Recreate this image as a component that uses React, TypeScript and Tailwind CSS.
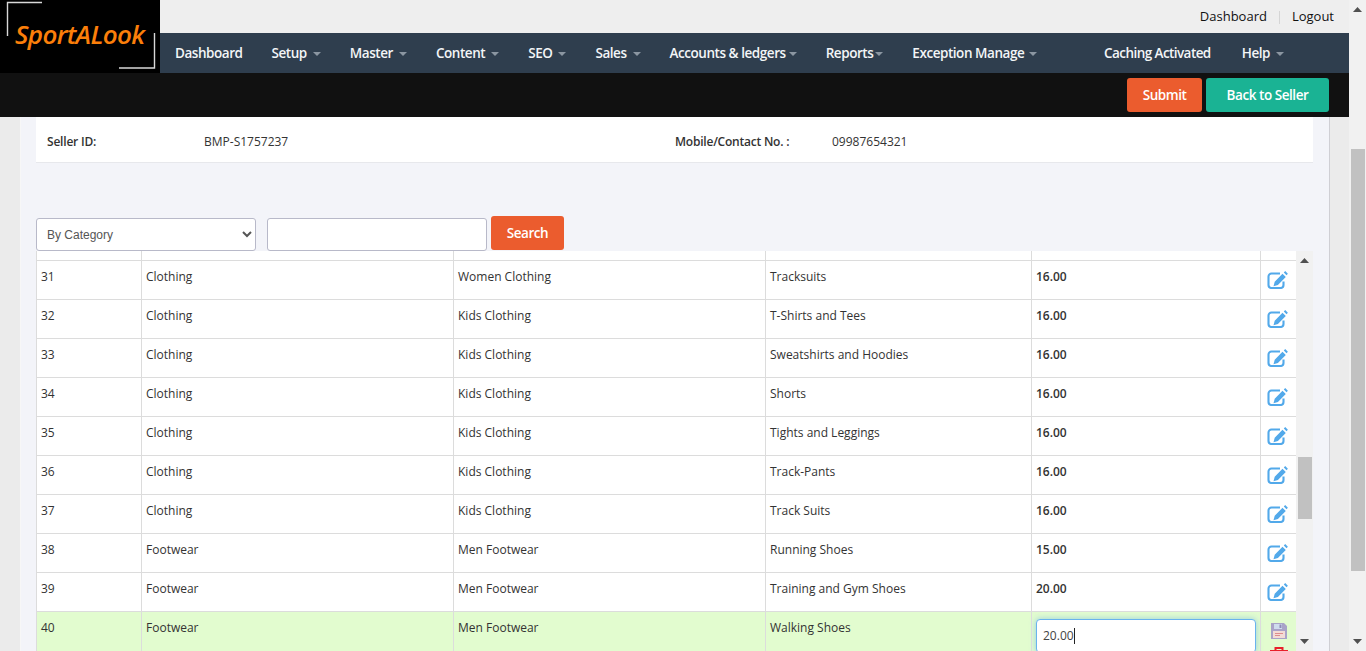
const FONT = "font-['Open_Sans','Noto_Sans',sans-serif]";

const NAV_LEFT = [
  { label: "Dashboard", caret: "" },
  { label: "Setup", caret: "ml-[6px]" },
  { label: "Master", caret: "ml-[6px]" },
  { label: "Content", caret: "ml-[6px]" },
  { label: "SEO", caret: "ml-[6px]" },
  { label: "Sales", caret: "ml-[6px]" },
  { label: "Accounts & ledgers", caret: "ml-[3px]" },
  { label: "Reports", caret: "ml-[2px]" },
  { label: "Exception Manage", caret: "ml-[5px]" },
];

const ROWS = [
  ["31", "Clothing", "Women Clothing", "Tracksuits", "16.00"],
  ["32", "Clothing", "Kids Clothing", "T-Shirts and Tees", "16.00"],
  ["33", "Clothing", "Kids Clothing", "Sweatshirts and Hoodies", "16.00"],
  ["34", "Clothing", "Kids Clothing", "Shorts", "16.00"],
  ["35", "Clothing", "Kids Clothing", "Tights and Leggings", "16.00"],
  ["36", "Clothing", "Kids Clothing", "Track-Pants", "16.00"],
  ["37", "Clothing", "Kids Clothing", "Track Suits", "16.00"],
  ["38", "Footwear", "Men Footwear", "Running Shoes", "15.00"],
  ["39", "Footwear", "Men Footwear", "Training and Gym Shoes", "20.00"],
];

const CELL = "border border-[#dcdcdc] px-[4px] pb-[5px] align-middle text-[12px] text-[#333]";
const LAST_CELL = "border border-[#dcdcdc] px-[4px] pb-[26px] align-middle text-[12px] text-[#333]";

function Caret({ className }: { className: string }) {
  return <span className={`${className} inline-block h-0 w-0 border-x-[4px] border-t-[4px] border-x-transparent border-t-[#8b96a1]`} />;
}

function Arrow({ down }: { down?: boolean }) {
  return (
    <svg width="9" height="5" viewBox="0 0 9 5" className="shrink-0">
      <path d={down ? "M0 0h9L4.500 5z" : "M4.500 0L9 5H0z"} fill="#505050" />
    </svg>
  );
}

function EditIcon() {
  return (
    <svg width="21" height="18" viewBox="0 0 21 18" className="mx-auto block -translate-x-[1px]">
      <path d="M13 2.500H4.500A3 3 0 0 0 1.500 5.500v8.500a3 3 0 0 0 3 3h9a3 3 0 0 0 3-3V10.500" fill="none" stroke="#52a9ea" strokeWidth="2.100" />
      <path d="M15.500 2.800l3.300 3.300-7.900 7.900-4.400 1.200 1.200-4.500zM16.800 1.500l1.400-1.400 2.700 2.700-1.400 1.500z" fill="#52a9ea" />
    </svg>
  );
}

function SaveIcon() {
  return (
    <svg width="16" height="16" viewBox="0 0 16 16" className="mx-auto block">
      <path d="M0 0h13l3 3v13H0z" fill="#a9a3c8" />
      <path d="M3 1h8v5H3z" fill="#cfdcee" />
      <path d="M8.500 1.500h2V5h-2z" fill="#8f8ab8" />
      <path d="M2 8h12v7H2z" fill="#f3dcd6" />
      <path d="M4 10h8v1H4zM4 12h5v1H4z" fill="#dd8c8c" />
    </svg>
  );
}

function DeleteIcon() {
  return (
    <svg width="18" height="16" viewBox="0 0 18 16" className="mx-auto mt-[8px] block">
      <path d="M5.500 3V1h7v2" fill="none" stroke="#e8202a" strokeWidth="2" />
      <path d="M0 3h18v2H0zM3 5h12v11H3z" fill="#e8202a" />
    </svg>
  );
}

function Logo() {
  return (
    <div className="relative flex h-[73px] w-[160px] shrink-0 items-start bg-black pl-[15px] pt-[17px]">
      <svg width="160" height="73" viewBox="0 0 160 73" className="absolute left-0 top-0">
        <path d="M42 2.500H7.500V36M154.500 33V68H119" fill="none" stroke="#d8d8d8" strokeWidth="1.400" />
      </svg>
      <span className="text-[26px] font-semibold italic leading-[34px] tracking-[-0.65px] text-[#fb7f0a]">SportALook</span>
    </div>
  );
}

function Header() {
  return (
    <div className="flex shrink-0">
      <Logo />
      <div className="min-w-0 flex-1">
        <div className="flex h-[33px] items-center justify-end bg-[#eeeeee] pt-[1px] pr-[15px] text-[13px] text-[#111]">
          <span>Dashboard</span>
          <span className="mx-[12px] h-[13px] w-px bg-[#d5d5d5]" />
          <span>Logout</span>
        </div>
        <div className="flex h-[40px] items-center justify-between bg-[#2f3e4e] pl-[15px] pr-[65px] pt-[1px] text-[13.5px] font-semibold tracking-[-0.45px] text-[#f3f5f7]">
          <div className="flex gap-[29px]">
            {NAV_LEFT.map((item) => (
              <span key={item.label} className="flex items-center">
                {item.label}
                {item.caret && <Caret className={item.caret} />}
              </span>
            ))}
          </div>
          <div className="flex gap-[31px]">
            <span className="tracking-[-0.57px]">Caching Activated</span>
            <span className="flex items-center">
              Help
              <Caret className="ml-[6px]" />
            </span>
          </div>
        </div>
      </div>
    </div>
  );
}

function ActionBar() {
  return (
    <div className="flex h-[44px] shrink-0 justify-end gap-[4px] bg-[#111111] pr-[20px] pt-[5px] text-[13.5px] font-semibold tracking-[-0.45px] text-white">
      <button type="button" className="h-[34px] w-[75px] rounded-[3px] bg-[#eb5c2e]">Submit</button>
      <button type="button" className="h-[34px] w-[123px] rounded-[3px] bg-[#1ab394]">Back to Seller</button>
    </div>
  );
}

function SellerInfo() {
  return (
    <div className="mr-[16px] flex h-[46px] items-center border-b border-[#e7e8ec] bg-white pl-[11px] pt-[5px] text-[12px] text-[#333]">
      <span className="w-[157px] font-semibold tracking-[-0.2px]">Seller ID:</span>
      <span className="w-[471px]">BMP-S1757237</span>
      <span className="w-[157px] font-semibold tracking-[-0.22px]">Mobile/Contact No. :</span>
      <span>09987654321</span>
    </div>
  );
}

function SearchBar() {
  return (
    <div className="mt-[53px] flex h-[35px] items-start">
      <select className="mt-[2px] h-[33px] w-[220px] rounded-[3px] border border-[#b8b9c9] bg-white pl-[6px] font-['Liberation_Sans',sans-serif] text-[12px] text-[#555]" defaultValue="category">
        <option value="category">By Category</option>
      </select>
      <input type="text" className="ml-[11px] mt-[2px] h-[33px] w-[220px] rounded-[3px] border border-[#b8b9c9] bg-white" />
      <button type="button" className="ml-[4px] h-[34px] w-[73px] rounded-[3px] bg-[#eb5c2e] text-[13.5px] font-semibold tracking-[-0.45px] text-white">Search</button>
    </div>
  );
}

function ProductTable() {
  return (
    <div className="mr-[16px] flex min-h-0 flex-1 overflow-hidden">
      <div className="w-[1260px] shrink-0 overflow-hidden bg-white">
        <table className="w-[1260px] table-fixed border-collapse">
          <colgroup>
            <col className="w-[105px]" />
            <col className="w-[312px]" />
            <col className="w-[312px]" />
            <col className="w-[266px]" />
            <col className="w-[229px]" />
            <col className="w-[36px]" />
          </colgroup>
          <tbody>
            <tr className="h-[9px] [&>td]:border [&>td]:border-t-0 [&>td]:border-[#dcdcdc]">
              <td /><td /><td /><td /><td /><td />
            </tr>
            {ROWS.map((row) => (
              <tr key={row[0]} className="h-[39px]">
                <td className={CELL}>{row[0]}</td>
                <td className={CELL}>{row[1]}</td>
                <td className={CELL}>{row[2]}</td>
                <td className={CELL}>{row[3]}</td>
                <td className={`${CELL} font-semibold`}>{row[4]}</td>
                <td className="border border-[#dcdcdc] align-middle">
                  <EditIcon />
                </td>
              </tr>
            ))}
            <tr className="h-[60px] bg-[#e2fccf]">
              <td className={LAST_CELL}>40</td>
              <td className={LAST_CELL}>Footwear</td>
              <td className={LAST_CELL}>Men Footwear</td>
              <td className={LAST_CELL}>Walking Shoes</td>
              <td className="border border-[#dcdcdc] px-[4px] pb-[10px] align-middle">
                <div className="flex h-[34px] items-center rounded-[4px] border border-[#69b3ee] bg-white pl-[6px] text-[12px] text-[#444] shadow-[0_0_6px_rgba(102,175,233,0.6)]">
                  20.00<span className="h-[16px] w-px bg-[#222]" />
                </div>
              </td>
              <td className="border border-[#dcdcdc] align-top">
                <div className="pt-[11px]">
                  <SaveIcon />
                  <DeleteIcon />
                </div>
              </td>
            </tr>
          </tbody>
        </table>
      </div>
      <div className="flex w-[17px] shrink-0 flex-col items-center bg-[#f1f1f1] pt-[7px]">
        <Arrow />
        <div className="mt-[194px] h-[62px] w-[14px] shrink-0 bg-[#c1c1c1]" />
        <div className="mt-auto pb-[7px]">
          <Arrow down />
        </div>
      </div>
    </div>
  );
}

export default function App() {
  return (
    <div className={`flex h-[651px] w-[1366px] overflow-hidden bg-[#ebebeb] ${FONT}`}>
      <div className="flex w-[1349px] shrink-0 flex-col">
        <Header />
        <ActionBar />
        <div className="ml-[20px] mr-[19px] flex min-h-0 flex-1 flex-col border-x border-l-[#f7f7f7] border-r-[#cfcfd4] bg-[#f3f4f9] pl-[15px]">
          <SellerInfo />
          <SearchBar />
          <ProductTable />
        </div>
      </div>
      <div className="flex w-[17px] shrink-0 flex-col items-center bg-[#f1f1f1] pt-[7px]">
        <Arrow />
        <div className="mt-[137px] h-[422px] w-[14px] shrink-0 bg-[#c1c1c1]" />
        <div className="mt-auto pb-[7px]">
          <Arrow down />
        </div>
      </div>
    </div>
  );
}
